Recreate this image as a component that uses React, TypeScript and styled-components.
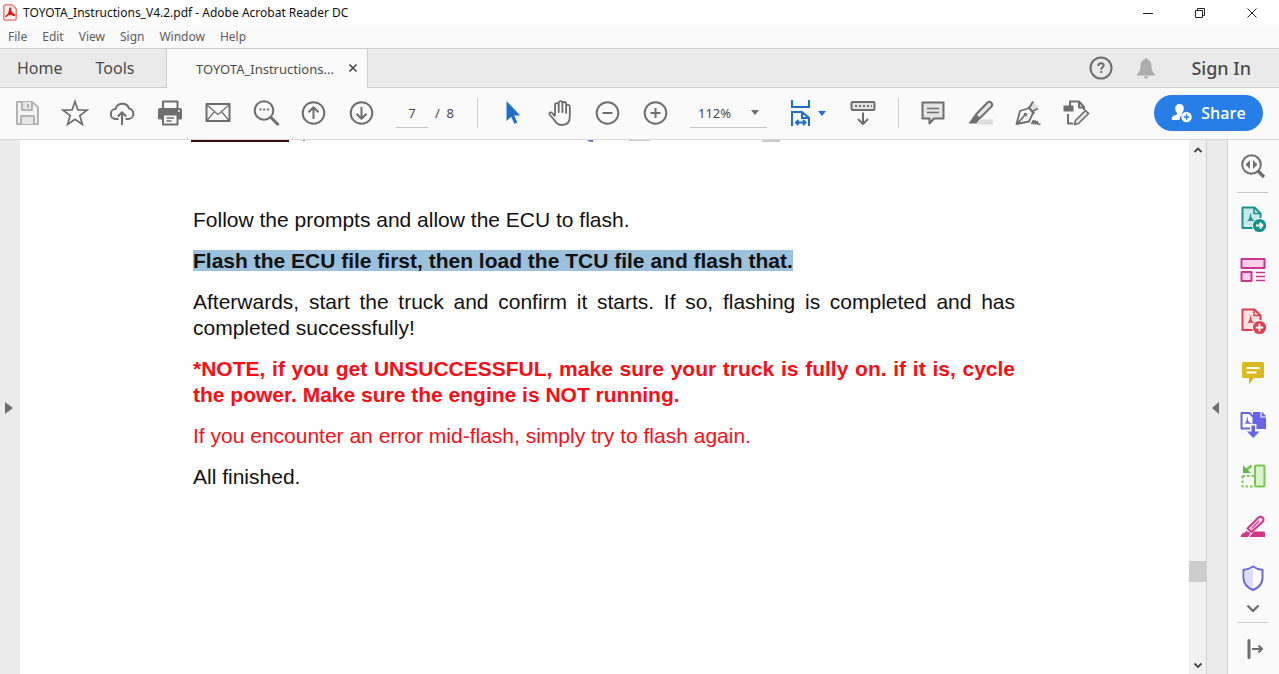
import React from "react";
import styled, { createGlobalStyle, css } from "styled-components";

const Global = createGlobalStyle`
  * { box-sizing: border-box; }
  html, body { margin: 0; padding: 0; }
  body { background: #fff; font-family: "Noto Sans", "Open Sans", sans-serif; color: #4b4b4b; }
  button, input, select { font-family: inherit; color: inherit; }
`;

const ink = "#6e6e6e";
const blue = "#1f6fc9";

/* ---------- window frame ---------- */

const Window = styled.div`
  display: flex;
  flex-direction: column;
  min-height: 100vh;
`;

const TitleBar = styled.header`
  display: flex;
  align-items: center;
  height: 25px;
  padding: 0 1px 0 3px;
  background: #fff;
`;

const Title = styled.h1`
  flex: 1;
  margin: 0 0 0 6px;
  font-size: 12px;
  line-height: 16px;
  font-weight: 400;
  color: #111;
  white-space: nowrap;
`;

const PlainButton = styled.button`
  display: flex;
  align-items: center;
  justify-content: center;
  padding: 0;
  border: 0;
  background: none;
  cursor: pointer;
`;

const WindowButton = styled(PlainButton)`
  width: 52px;
  height: 25px;
`;

const MenuBar = styled.nav`
  display: flex;
  align-items: center;
  gap: 15px;
  height: 23px;
  padding-left: 8px;
  background: #fafafa;
`;

const MenuItem = styled(PlainButton)`
  font-size: 12px;
  line-height: 16px;
  color: #5c5c5c;
`;

const TabBar = styled.div`
  display: flex;
  align-items: stretch;
  height: 40px;
  border-top: 1px solid #cdcdcd;
  background: #eaeaea;
`;

const MainTabs = styled.div`
  display: flex;
  align-items: center;
  gap: 33px;
  width: 167px;
  padding-left: 17px;
  border-right: 1px solid #cdcdcd;
  border-bottom: 1px solid #cdcdcd;
`;

const MainTab = styled(PlainButton)`
  font-size: 16px;
  line-height: 24px;
`;

const DocTab = styled.div`
  display: flex;
  align-items: center;
  justify-content: space-between;
  width: 201px;
  padding: 0 9px 0 29px;
  border-right: 1px solid #cdcdcd;
  background: #fafafa;
`;

const DocName = styled(PlainButton)`
  font-size: 13px;
  line-height: 20px;
  padding-top: 1px;
  white-space: nowrap;
`;

const CloseTab = styled(PlainButton)`
  padding-bottom: 2px;
`;

const Account = styled.div`
  display: flex;
  flex: 1;
  align-items: center;
  justify-content: flex-end;
  gap: 22px;
  padding-right: 28px;
  border-bottom: 1px solid #cdcdcd;
`;

const SignIn = styled(PlainButton)`
  margin-left: 12px;
  font-size: 18px;
  line-height: 24px;
  font-weight: 500;
`;

/* ---------- toolbar ---------- */

const Toolbar = styled.div`
  display: flex;
  align-items: center;
  height: 52px;
  padding: 0 16px 1px 3px;
  border-bottom: 1px solid #d8d8d8;
  background: #fafafa;
`;

const IconGroup = styled.div<{ $count: number; $width: number }>`
  display: grid;
  grid-template-columns: repeat(${(p) => p.$count}, 1fr);
  width: ${(p) => p.$width}px;
  flex: none;
`;

const IconButton = styled(PlainButton)`
  height: 40px;
`;

const Separator = styled.div`
  flex: none;
  width: 1px;
  height: 30px;
  margin: 0 10px;
  background: #cfcfcf;
`;

const Pager = styled.label`
  display: flex;
  align-items: center;
  width: 71px;
  margin-left: 11px;
  font-size: 13px;
  white-space: pre;
`;

const PageInput = styled.input`
  width: 32px;
  height: 30px;
  margin-right: 7px;
  padding: 0;
  border: 0;
  border-bottom: 1px solid #c6c6c6;
  background: none;
  font-size: 13px;
  text-align: center;
  outline: none;
`;

const ZoomBox = styled.div`
  display: flex;
  align-items: center;
  width: 77px;
  height: 30px;
  margin-left: 11px;
  padding-right: 8px;
  border-bottom: 1px solid #c6c6c6;
`;

const ZoomSelect = styled.select`
  flex: 1;
  min-width: 0;
  padding: 0 0 0 8px;
  border: 0;
  appearance: none;
  background: none;
  font-size: 13px;
  outline: none;
`;

const FitButton = styled(PlainButton)`
  gap: 3px;
  width: 42px;
  height: 40px;
  margin-left: 18px;
`;

const ScrollModeButton = styled(PlainButton)`
  width: 48px;
  height: 40px;
  margin: 0 1px 0 12px;
`;

const ShareButton = styled(PlainButton)`
  gap: 8px;
  width: 109px;
  height: 36px;
  margin-left: auto;
  border-radius: 18px;
  background: #267ee6;
  color: #fff;
  font-family: "Open Sans", "Noto Sans", sans-serif;
  font-size: 16px;
  line-height: 24px;
  font-weight: 600;
`;

/* ---------- document area ---------- */

const Workspace = styled.div`
  display: flex;
  flex: 1;
`;

const PaneHandle = styled(PlainButton)<{ $side: "left" | "right" }>`
  flex: none;
  width: 20px;
  background: #ebebeb;
  ${(p) =>
    p.$side === "left"
      ? css`justify-content: flex-start; padding-left: 5px;`
      : css`
          width: 22px;
          padding-right: 3px;
          border-left: 1px solid #d2d2d2;
          border-right: 1px solid #d2d2d2;
        `}
`;

const PageView = styled.main`
  flex: 1;
  min-width: 0;
  padding-right: 1px;
  background: #fff;
`;

const PageBody = styled.article`
  max-width: 822px;
  margin: 0 auto;
  font-family: "Liberation Sans", Arial, sans-serif;
  font-size: 21px;
  line-height: 26px;
  color: #111;
  text-align: justify;
`;

const Figure = styled.div`
  height: 67px;

  svg {
    display: block;
    margin-left: -2px;
  }
`;

const Paragraph = styled.p<{ $tone?: "alert" }>`
  margin: 0 0 15px;
  color: ${(p) => (p.$tone === "alert" ? "#fb0d16" : "inherit")};
`;

const Selection = styled.mark`
  display: inline-block;
  background: #9bc1dc;
  color: inherit;
  font-weight: 700;
  line-height: 21px;
`;

const ScrollBar = styled.div`
  display: flex;
  flex-direction: column;
  flex: none;
  width: 17px;
  background: #f0f0f0;
`;

const ScrollArrow = styled(PlainButton)`
  height: 20px;
`;

const TrackPart = styled.div<{ $share: number }>`
  flex: ${(p) => p.$share} 1 0;
`;

const Thumb = styled.div`
  height: 21px;
  background: #cdcdcd;
`;

/* ---------- tools pane ---------- */

const ToolsPane = styled.aside`
  display: flex;
  flex-direction: column;
  align-items: center;
  flex: none;
  width: 51px;
  padding-right: 2px;
  background: #fafafa;
`;

const PaneButton = styled(PlainButton)`
  width: 49px;
  height: 52px;
`;

const Rule = styled.hr`
  width: 31px;
  height: 1px;
  margin: 0;
  border: 0;
  background: #c9c9c9;
`;

const ToolList = styled.div`
  display: grid;
  grid-template-rows: repeat(8, 1fr);
  justify-items: center;
  height: 411px;
`;

const ToolButton = styled(PlainButton)`
  width: 49px;
`;

const MoreButton = styled(PlainButton)`
  width: 49px;
  height: 18px;
  align-items: flex-start;
`;

/* ---------- drawings ---------- */

type IconProps = { children: React.ReactNode; color?: string; size?: number; width?: number };

const Icon = ({ children, color = ink, size = 28, width = 2 }: IconProps) => (
  <svg
    width={size}
    height={size}
    viewBox={`0 0 ${size} ${size}`}
    fill="none"
    stroke={color}
    strokeWidth={width}
    strokeLinejoin="round"
    aria-hidden="true"
  >
    {children}
  </svg>
);

const Triangle = ({ d, w, h, color = ink }: { d: string; w: number; h: number; color?: string }) => (
  <svg width={w} height={h} viewBox={`0 0 ${w} ${h}`} fill={color} aria-hidden="true">
    <path d={d} />
  </svg>
);

const acrobat = "M-5 5C-3 3.5-.5-1-.3-5C0-6.5 1-6 .7-4C.4-1 3 2.3 5.5 2.8C7 3.2 5.5 4.2 4 3.4C1 2-1.8 2.3-4 4C-5.5 5.5-6 5.6-5 5Z";

const fileTools = [
  {
    label: "Save",
    art: (
      <Icon color="#b4b4b4">
        <path d="M4 3h15l6 5v17H4z" fill="#f4f4f4" />
        <path d="M9 3v8h10V3M8 25v-8h13v8" fill="#e6e6e6" />
        <path d="M15 5v4" />
      </Icon>
    ),
  },
  {
    label: "Add to favourites",
    art: (
      <Icon>
        <path d="M14 2.5l2.9 8.4 9.1.2-7.200 5.400 2.600 8.900L14 20.200l-7.400 5.200 2.600-8.900L2 11.100l9.100-.2z" strokeLinejoin="miter" strokeWidth={1.700} />
      </Icon>
    ),
  },
  {
    label: "Upload to cloud",
    art: (
      <Icon>
        <path d="M10.500 20H8a5 5 0 0 1-.4-10A7 7 0 0 1 21 9.500 5.300 5.300 0 0 1 20.500 20h-3M14 26V13.500M9.800 17.500l4.200-4.200 4.200 4.200" />
      </Icon>
    ),
  },
  {
    label: "Print",
    art: (
      <Icon>
        <path d="M7 10V2.500h14.500V10" />
        <path d="M2 11q0-2 2-2h20q2 0 2 2v8q0 1.500-2 1.500H4q-2 0-2-1.500z" fill={ink} stroke="none" />
        <path d="M7 15.500h14.500v10H7z" fill="#fafafa" />
        <path d="M10.500 19h7.500M10.500 22h5" strokeWidth={1.300} />
        <path d="M22 12h2" stroke="#fafafa" strokeWidth={1.500} />
      </Icon>
    ),
  },
  {
    label: "Email",
    art: (
      <Icon>
        <rect x="2.500" y="5" width="23" height="17" />
        <path d="M3 6l11 9.500L25 6M3 21.500l7.500-9M25 21.500l-7.500-9" strokeWidth={1.200} />
      </Icon>
    ),
  },
  {
    label: "Find",
    art: (
      <Icon>
        <circle cx="12" cy="11.500" r="9.300" />
        <path d="M19 18.500l7.500 7.500" strokeWidth={3} />
        <path d="M7.500 10.500h2M11.200 10.500h2M14.900 10.500h2" />
      </Icon>
    ),
  },
  {
    label: "Previous page",
    art: (
      <Icon>
        <circle cx="14.500" cy="14" r="10.800" />
        <path d="M14.500 20V8.500M9.500 13.300l5-5 5 5" />
      </Icon>
    ),
  },
  {
    label: "Next page",
    art: (
      <Icon>
        <circle cx="14.500" cy="14" r="10.800" />
        <path d="M14.500 8v11.500M9.500 14.700l5 5 5-5" />
      </Icon>
    ),
  },
];

const viewTools = [
  {
    label: "Select",
    art: (
      <Icon>
        <path d="M8.500 2v20l4.700-4.200 3.100 7 3-1.300-3-6.900h5.900z" fill={blue} stroke="none" />
      </Icon>
    ),
  },
  {
    label: "Pan",
    art: (
      <Icon width={1.800}>
        <path d="M9 16.500V6c0-2.400 3.700-2.400 3.700 0v7V4c0-2.400 3.700-2.400 3.700 0v9V4.800c0-2.400 3.700-2.400 3.700 0V14 7.500c0-2.300 3.700-2.300 3.700 0V17.500c0 5.500-3 8.500-7.800 8.500-4 0-6-1.800-7.700-5L3.500 15.500c-.8-1.700 1.400-2.900 2.600-1.500l2.900 3.300" />
      </Icon>
    ),
  },
  {
    label: "Zoom out",
    art: (
      <Icon>
        <circle cx="14.500" cy="14" r="10.800" />
        <path d="M9.500 14h10" />
      </Icon>
    ),
  },
  {
    label: "Zoom in",
    art: (
      <Icon>
        <circle cx="14.500" cy="14" r="10.800" />
        <path d="M9.500 14h10M14.500 9v10" />
      </Icon>
    ),
  },
];

const reviewTools = [
  {
    label: "Add comment",
    art: (
      <Icon>
        <path d="M3.500 3.500h21v16H15l-4.500 5v-5h-7z" fill="#e4e4e4" />
        <path d="M8 9.500h12M8 13.500h12" strokeWidth={1.400} />
      </Icon>
    ),
  },
  {
    label: "Highlight text",
    art: (
      <Icon>
        <path d="M14 20.500h12v5H9z" fill="#dcdcdc" stroke="none" />
        <path d="M8.500 16L20.500 3.500q1.900-1.500 3.800.3 1.700 1.900.2 3.800L12.500 19.500z" fill="#e4e4e4" />
        <path d="M7.500 16l5 4.500-3 4H1.500z" fill={ink} stroke="none" />
      </Icon>
    ),
  },
  {
    label: "Sign document",
    art: (
      <Icon width={1.800}>
        <path d="M15.500 6l3.500-4 5 6-4.500 3z" fill="#dedede" stroke="none" />
        <path d="M2.500 25l3.500-13 9-3 4 5-4 8.500zM3 25l7.500-8.500M14.500 7.500l6 7M19 12l5-2.500M15.500 8.500l3.500-6" />
        <circle cx="11.500" cy="15.500" r="1.800" fill={ink} stroke="none" />
        <path d="M17.500 25q2.800-7 2 0 2.800-6 2 0 2.300-5 2 0h3" strokeWidth={1.500} />
      </Icon>
    ),
  },
  {
    label: "Fill and edit",
    art: (
      <Icon>
        <path d="M8 7V2.500h9l5 5.500v3M17 3v5.500h5M6 15v9.500h5" />
        <rect x="1.500" y="6.500" width="10" height="6" fill={ink} stroke="none" />
        <path d="M13.500 21.500L23.500 11.500l3 3-10 10-4 1z" fill="#e8e8e8" strokeWidth={1.700} />
      </Icon>
    ),
  },
];

const PdfSheet = ({ color, fill, badge }: { color: string; fill: string; badge: string }) => (
  <Icon color={color}>
    <path d="M3.500 2.500h12l6 6V23h-18z" fill={fill} />
    <path d={acrobat} transform="translate(11.500 13.500) scale(.9)" fill={color} stroke="none" />
    <path d="M15 2.500v6h6.500" strokeWidth={1.500} />
    <circle cx="20.500" cy="20.500" r="7.500" fill="#fafafa" stroke="none" />
    <circle cx="20.500" cy="20.500" r="6.600" fill={color} stroke="none" />
    <path d={badge} stroke="#fff" strokeWidth={2} />
  </Icon>
);

const paneTools = [
  { label: "Export PDF", art: <PdfSheet color="#16928c" fill="#c9ebe8" badge="M17 20.500h6M20.800 17.700l2.700 2.800-2.700 2.800" /> },
  {
    label: "Organize pages",
    art: (
      <Icon color="#cb3491">
        <rect x="2.500" y="3" width="23" height="9" fill="#f7cfe8" />
        <rect x="2.500" y="16" width="10" height="9" fill="#f7cfe8" />
        <path d="M17 16.500h9M17 20.500h9M17 24.500h9" strokeWidth={1.400} />
      </Icon>
    ),
  },
  { label: "Create PDF", art: <PdfSheet color="#dc4150" fill="#fde2e4" badge="M16.800 20.500h7.400M20.500 16.800v7.400" /> },
  {
    label: "Comment",
    art: (
      <Icon>
        <path d="M4.500 3h19q1.500 0 1.500 1.500v13q0 1.500-1.500 1.500H15l-5 6.500V19H4.500Q3 19 3 17.500v-13Q3 3 4.500 3z" fill="#dcb91f" stroke="none" />
        <path d="M7.500 9h13M7.500 13.500h10" stroke="#fff" strokeWidth={1.800} />
      </Icon>
    ),
  },
  {
    label: "Combine files",
    art: (
      <Icon color="#6565e6">
        <path d="M14 2h9l4 4v13H14z" fill="#6565e6" stroke="none" />
        <path d="M22 1.500v5.500h5.500" stroke="#fafafa" strokeWidth={1.200} />
        <path d="M2.500 3h8l4 4v11.500h-12z" fill="#fafafa" />
        <path d={acrobat} transform="translate(8.300 11.500) scale(.75)" fill="#6565e6" stroke="none" />
        <path d="M11 14h6.500v6.500H22L14.200 28.500 6 20.500h5z" fill="#fafafa" stroke="none" />
        <path d="M12.500 15.500h3.500v6h4.500L14.200 28 8 21.500h4.500z" fill="#6565e6" stroke="none" />
      </Icon>
    ),
  },
  {
    label: "Compress PDF",
    art: (
      <Icon color="#7cc653">
        <rect x="16" y="3.500" width="9.500" height="21" rx="1" fill="#d9f3ca" />
        <path d="M3.500 14v10.500h12M3.500 14h12" strokeDasharray="2.500 2" />
        <path d="M12.500 3.500l-7 6" strokeWidth={2.600} />
        <path d="M4 3.500v7.500h8z" fill="#58b947" stroke="none" />
      </Icon>
    ),
  },
  {
    label: "Redact",
    art: (
      <Icon color="#d3368f">
        <path d="M15 18.500h10q1 0 1 1V24H10z" fill="#d3368f" stroke="none" />
        <path d="M8.500 15.500L19.500 4.500q2.200-1.700 4.200.1 1.600 2 0 4.100L12.500 19z" fill="#fbe0ef" />
        <path d="M7.500 18l4 2-2.500 4H1.500q1-4 3.500-4z" fill="#d3368f" stroke="none" />
        <path d="M12.500 15.500l7.500-7.500" strokeWidth={1.200} />
      </Icon>
    ),
  },
  {
    label: "Protect",
    art: (
      <Icon color="#6767e0">
        <path d="M14 2.500q5 3.500 9.500 3.200V14q0 8-9.500 12Q4.500 22 4.500 14V5.700Q9 6 14 2.500z" fill="#fff" />
        <path d="M14 4.500q-4 2.500-8.300 2.700V14q0 6.700 8.300 10.500z" fill="#dcdcfa" stroke="none" />
      </Icon>
    ),
  },
];

const menus = ["File", "Edit", "View", "Sign", "Window", "Help"];

export default function App() {
  return (
    <Window>
      <Global />
      <TitleBar>
        <svg width="14" height="17" viewBox="0 0 14 17" aria-hidden="true">
          <path d="M2.500.8h6.700l4 4v9.700q0 1.700-1.700 1.700h-9Q.8 16.200.8 14.500v-12Q.8.8 2.500.8z" fill="#fff0f0" stroke="#ee6a6a" strokeWidth="1.300" />
          <path d={acrobat} transform="translate(7 8.500) scale(.75)" fill="#d8201f" stroke="#d8201f" strokeWidth="2" />
        </svg>
        <Title>TOYOTA_Instructions_V4.2.pdf - Adobe Acrobat Reader DC</Title>
        <WindowButton aria-label="Minimize">
          <Icon size={12} color="#222" width={1}><path d="M1 6.500h10" /></Icon>
        </WindowButton>
        <WindowButton aria-label="Restore">
          <Icon size={12} color="#222" width={1}><path d="M1.500 3.500h7v7h-7zM3.500 3.500v-2h7v7h-2" strokeLinejoin="miter" /></Icon>
        </WindowButton>
        <WindowButton aria-label="Close">
          <Icon size={12} color="#222" width={1}><path d="M1.500 1.500l9 9M10.500 1.500l-9 9" /></Icon>
        </WindowButton>
      </TitleBar>

      <MenuBar>
        {menus.map((m) => <MenuItem key={m}>{m}</MenuItem>)}
      </MenuBar>

      <TabBar>
        <MainTabs>
          <MainTab>Home</MainTab>
          <MainTab>Tools</MainTab>
        </MainTabs>
        <DocTab>
          <DocName>TOYOTA_Instructions...</DocName>
          <CloseTab aria-label="Close tab">
            <Icon size={10} color="#4b4b4b" width={1.700}><path d="M1.500 1.500l7 7M8.500 1.500l-7 7" /></Icon>
          </CloseTab>
        </DocTab>
        <Account>
          <PlainButton aria-label="Help">
            <Icon size={24}>
              <circle cx="12" cy="12" r="10.500" />
              <path d="M9.300 10q0-2.800 2.700-2.800t2.700 2.300c0 1.800-2.500 2-2.500 4.200M12.200 15v2" />
            </Icon>
          </PlainButton>
          <PlainButton aria-label="Notifications">
            <Icon size={22}>
              <path d="M11 1q1.300 0 1.400 1.500 4.100 1 4.100 6.500 0 6 3.500 8v1.500H2V17q3.500-2 3.500-8 0-5.500 4.100-6.500Q9.700 1 11 1zM8.500 19.500h5q-.5 2-2.500 2t-2.500-2z" fill="#adadad" stroke="none" />
            </Icon>
          </PlainButton>
          <SignIn>Sign In</SignIn>
        </Account>
      </TabBar>

      <Toolbar>
        <IconGroup $count={8} $width={382}>
          {fileTools.map((t) => <IconButton key={t.label} aria-label={t.label}>{t.art}</IconButton>)}
        </IconGroup>
        <Pager>
          <PageInput aria-label="Page number" defaultValue="7" />
          {"/  8"}
        </Pager>
        <Separator />
        <IconGroup $count={4} $width={191}>
          {viewTools.map((t) => <IconButton key={t.label} aria-label={t.label}>{t.art}</IconButton>)}
        </IconGroup>
        <ZoomBox>
          <ZoomSelect aria-label="Zoom level" defaultValue="112%">
            <option>112%</option>
          </ZoomSelect>
          <Triangle w={8} h={5} d="M0 0h8L4 5z" />
        </ZoomBox>
        <FitButton aria-label="Fit width">
          <Icon color={blue}>
            <path d="M5 1v7h17V1M5 27V13h10l7 6v8M15 13v6h7M9 23.500h9.500M11.500 21L9 23.500l2.500 2.500M16 21l2.500 2.500-2.500 2.500" strokeLinejoin="miter" />
          </Icon>
          <Triangle w={8} h={5} d="M0 0h8L4 5z" color={blue} />
        </FitButton>
        <ScrollModeButton aria-label="Page display">
          <Icon>
            <rect x="2.500" y="3" width="23" height="8" rx="1" fill="#e4e4e4" />
            <path d="M6 7h17" strokeDasharray="2 2" />
            <path d="M14 13.500V24.500M9 20l5 5 5-5" />
          </Icon>
        </ScrollModeButton>
        <Separator />
        <IconGroup $count={4} $width={191}>
          {reviewTools.map((t) => <IconButton key={t.label} aria-label={t.label}>{t.art}</IconButton>)}
        </IconGroup>
        <ShareButton>
          <Icon size={22}>
            <path d="M8.500 2q4.300 0 4.300 4.500 0 3-1.800 4.700v1.300q-2.500 2-2.500 5.500H1.500q-.8 0-.8-1.500 0-3 5.300-4v-1.300Q4.200 9.500 4.200 6.500 4.200 2 8.500 2z" fill="#fff" stroke="none" />
            <circle cx="15.500" cy="15" r="5.200" fill="#fff" stroke="none" />
            <path d="M12.800 15h5.400M15.500 12.300v5.400" stroke="#267ee6" strokeWidth={1.400} />
          </Icon>
          Share
        </ShareButton>
      </Toolbar>

      <Workspace>
        <PaneHandle $side="left" aria-label="Show navigation pane">
          <Triangle w={8} h={12} d="M0 0l8 6-8 6z" />
        </PaneHandle>
        <PageView>
          <PageBody>
            <Figure>
              <svg width="590" height="3" viewBox="0 0 590 3" aria-hidden="true">
                <path d="M0 0h98v2H0z" fill="#3a0a10" />
                <path d="M112 0h2v1h-2z" fill="#888" />
                <path d="M396 0h6v2h-3z" fill="#5b7fae" />
                <path d="M438 0h21v1h-21z" fill="#ccc" />
                <path d="M571 0h18v2h-18z" fill="#ccc" />
              </svg>
            </Figure>
            <Paragraph>Follow the prompts and allow the ECU to flash.</Paragraph>
            <Paragraph>
              <Selection>Flash the ECU file first, then load the TCU file and flash that.</Selection>
            </Paragraph>
            <Paragraph>
              Afterwards, start the truck and confirm it starts. If so, flashing is completed and has
              completed successfully!
            </Paragraph>
            <Paragraph $tone="alert">
              <strong>
                *NOTE, if you get UNSUCCESSFUL, make sure your truck is fully on. if it is, cycle
                the power. Make sure the engine is NOT running.
              </strong>
            </Paragraph>
            <Paragraph $tone="alert">If you encounter an error mid-flash, simply try to flash again.</Paragraph>
            <Paragraph>All finished.</Paragraph>
          </PageBody>
        </PageView>
        <ScrollBar>
          <ScrollArrow aria-label="Scroll up">
            <Icon size={10} color="#444" width={1.800}><path d="M1.500 7L5 3.500 8.500 7" strokeLinejoin="miter" /></Icon>
          </ScrollArrow>
          <TrackPart $share={401} />
          <Thumb />
          <TrackPart $share={73} />
          <ScrollArrow aria-label="Scroll down">
            <Icon size={10} color="#444" width={1.800}><path d="M1.500 3.500L5 7l3.500-3.500" strokeLinejoin="miter" /></Icon>
          </ScrollArrow>
        </ScrollBar>
        <PaneHandle $side="right" aria-label="Hide tools pane">
          <Triangle w={7} h={12} d="M7 0L0 6l7 6z" />
        </PaneHandle>
        <ToolsPane>
          <PaneButton aria-label="Search tools">
            <Icon>
              <circle cx="12.500" cy="12.500" r="9.300" />
              <path d="M19 19l6 6" strokeWidth={3.200} />
              <path d="M11 8v9l-4.500-4.500zM14 8v9l4.500-4.500z" fill={ink} stroke="none" />
            </Icon>
          </PaneButton>
          <Rule />
          <ToolList>
            {paneTools.map((t) => <ToolButton key={t.label} aria-label={t.label}>{t.art}</ToolButton>)}
          </ToolList>
          <MoreButton aria-label="More tools">
            <Icon size={14}><path d="M1.500 1.500L7 7l5.500-5.500" strokeWidth={2.400} /></Icon>
          </MoreButton>
          <Rule />
          <PaneButton aria-label="Collapse pane">
            <Icon size={20}>
              <path d="M6 1.500v17" strokeWidth={3} strokeLinecap="round" />
              <path d="M9 10h10M15.500 6.500L19 10l-3.500 3.500" />
            </Icon>
          </PaneButton>
        </ToolsPane>
      </Workspace>
    </Window>
  );
}
